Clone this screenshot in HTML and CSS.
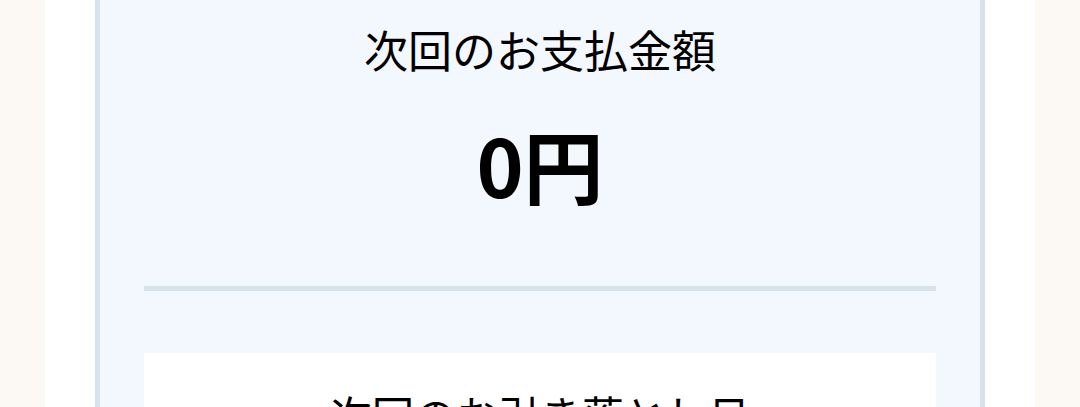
FILE: index.html
```html
<!DOCTYPE html>
<html lang="ja">
<head>
<meta charset="utf-8">
<link rel="stylesheet" href="styles.css">
</head>
<body>
<div class="page">
  <section class="card">
    <h2 class="title">次回のお支払金額</h2>
    <p class="amount">0円</p>
    <hr class="divider">
    <div class="sub-box">
      <h3 class="sub-title">次回のお引き落とし日</h3>
    </div>
  </section>
</div>
</body>
</html>
```
FILE: styles.css
```css
html, body {
  margin: 0;
  padding: 0;
  height: 100%;
  overflow: hidden;
}
body {
  background: #fcf8f4;
  font-family: "Noto Sans CJK JP", "Noto Sans", sans-serif;
  color: #000;
}
.page {
  width: 990px;
  margin: 0 auto;
  background: #fff;
  padding: 0 50px;
  box-sizing: border-box;
  min-height: 100%;
}
.card {
  margin-top: -40px;
  background: #f3f7fe;
  border: 5px solid #d8e2ec;
  padding: 53px 44px 0;
  min-height: 600px;
}
.title {
  margin: 0;
  font-size: 44px;
  font-weight: 400;
  line-height: 62px;
  text-align: center;
}
.amount {
  margin: 35px 0 0;
  font-size: 80px;
  font-weight: 700;
  line-height: 96px;
  text-align: center;
}
.divider {
  margin: 75px 0 0;
  border: 0;
  height: 5px;
  background: #d8e2ec;
}
.sub-box {
  margin-top: 62px;
  background: #fff;
  padding: 31px 0 40px;
}
.sub-title {
  margin: 0;
  font-size: 42px;
  font-weight: 400;
  line-height: 59px;
  text-align: center;
}
```
